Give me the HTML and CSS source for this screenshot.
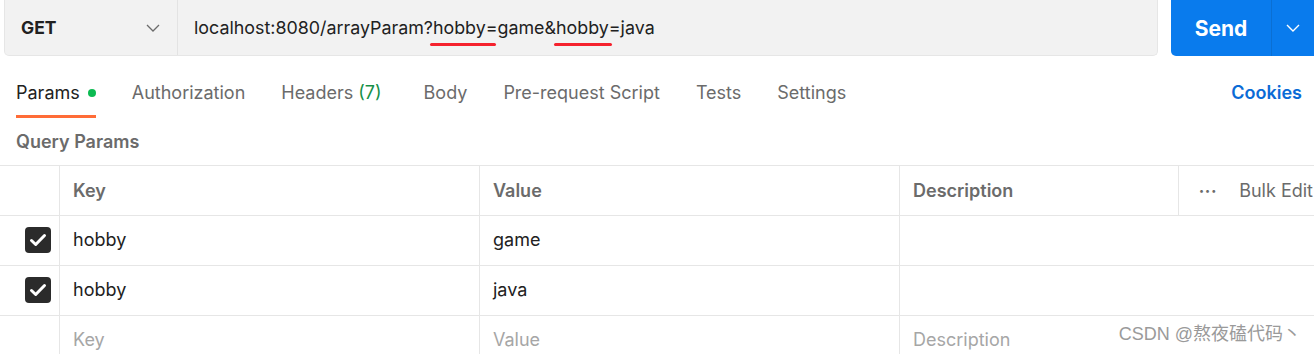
FILE: index.html
```html
<!DOCTYPE html>
<html>
<head>
<meta charset="utf-8">
<link rel="stylesheet" href="styles.css">
</head>
<body>
<div class="topbar">
  <div class="urlbox">
    <div class="method"><span class="method-name">GET</span>
      <svg class="chev" width="14" height="8" viewBox="0 0 14 8"><path d="M1 1l6 6 6-6" fill="none" stroke="#6b6b6b" stroke-width="1.3"/></svg>
    </div>
    <div class="url">localhost:8080/arrayParam?<span class="mark mark-a">hobby</span>=game&amp;<span class="mark mark-b">hobby</span>=java</div>
  </div>
  <div class="send">
    <div class="send-main">Send</div>
    <div class="send-arrow"><svg width="14" height="8" viewBox="0 0 14 8"><path d="M1 1l6 6 6-6" fill="none" stroke="#fff" stroke-width="1.4"/></svg></div>
  </div>
</div>
<div class="tabs">
  <div class="tab active">Params<span class="dot"></span></div>
  <div class="tab">Authorization</div>
  <div class="tab">Headers <span class="count">(7)</span></div>
  <div class="tab body-tab">Body</div>
  <div class="tab">Pre-request Script</div>
  <div class="tab">Tests</div>
  <div class="tab">Settings</div>
  <div class="cookies">Cookies</div>
</div>
<div class="section-title">Query Params</div>
<div class="table">
  <div class="row head">
    <div class="cell c-check"></div>
    <div class="cell c-key">Key</div>
    <div class="cell c-val">Value</div>
    <div class="cell c-desc">Description</div>
    <div class="cell c-act"><span class="dots">•••</span><span class="bulk">Bulk Edit</span></div>
  </div>
  <div class="row">
    <div class="cell c-check"><span class="cb"><svg width="18" height="14" viewBox="0 0 18 14"><path d="M2.5 7.5l4.2 4L15.5 2.5" fill="none" stroke="#fff" stroke-width="3" stroke-linecap="round" stroke-linejoin="round"/></svg></span></div>
    <div class="cell c-key">hobby</div>
    <div class="cell c-val">game</div>
    <div class="cell c-descwide"></div>
  </div>
  <div class="row">
    <div class="cell c-check"><span class="cb"><svg width="18" height="14" viewBox="0 0 18 14"><path d="M2.5 7.5l4.2 4L15.5 2.5" fill="none" stroke="#fff" stroke-width="3" stroke-linecap="round" stroke-linejoin="round"/></svg></span></div>
    <div class="cell c-key">hobby</div>
    <div class="cell c-val">java</div>
    <div class="cell c-descwide"></div>
  </div>
  <div class="row ph">
    <div class="cell c-check"></div>
    <div class="cell c-key">Key</div>
    <div class="cell c-val">Value</div>
    <div class="cell c-descwide">Description</div>
  </div>
</div>
<div class="watermark">CSDN @熬夜磕代码丶</div>
</body>
</html>
```
FILE: styles.css
```css
* { box-sizing: border-box; }
html, body { margin: 0; padding: 0; }
body {
  width: 1314px;
  height: 354px;
  overflow: hidden;
  background: #fff;
  font-family: Inter, "Noto Sans", "Noto Sans CJK SC", sans-serif;
  color: #212121;
  position: relative;
}
.topbar {
  display: flex;
  height: 56px;
  padding-left: 4px;
  gap: 13px;
}
.urlbox {
  width: 1154px;
  height: 56px;
  background: #f2f2f2;
  border: 1px solid #e6e6e6;
  border-top: none;
  border-radius: 0 0 5px 5px;
  display: flex;
  align-items: center;
}
.method {
  width: 173px;
  height: 100%;
  border-right: 1px solid #e3e3e3;
  display: flex;
  align-items: center;
  justify-content: space-between;
  padding: 0 17px 0 16px;
}
.method-name { font-weight: 700; font-size: 17.5px; color: #212121; }
.url {
  padding-left: 16px;
  padding-bottom: 1px;
  font-size: 17.85px;
  color: #212121;
}
.mark { position: relative; }
.mark::after {
  content: "";
  position: absolute;
  top: 26px;
  height: 3px;
  border-radius: 2px;
  background: #f5222d;
}
.mark-a::after { left: -3px; right: -10px; }
.mark-b::after { left: -2px; right: -3px; }
.send {
  flex: 1;
  height: 56px;
  background: #097bed;
  border-radius: 0 0 0 5px;
  display: flex;
  color: #fff;
}
.send-main {
  width: 101px;
  display: flex;
  align-items: center;
  justify-content: center;
  font-weight: 700;
  font-size: 21px;
  border-right: 1px solid #0a6fd3;
}
.send-arrow {
  flex: 1;
  display: flex;
  align-items: center;
  justify-content: center;
}
.tabs {
  display: flex;
  height: 62px;
  padding: 0 12px 0 16px;
  gap: 36px;
}
.tab {
  display: flex;
  align-items: center;
  font-size: 18px;
  color: #6b6b6b;
  padding-top: 14px;
  border-bottom: 3px solid transparent;
  height: 62px;
}
.tab.active { color: #212121; border-bottom-color: #ff6c37; }
.dot {
  width: 8px; height: 8px; border-radius: 50%;
  background: #0cbb52; margin-left: 8px;
}
.count { color: #168f48; margin-left: 5px; }
.body-tab { margin-left: 6px; }
.cookies {
  margin-left: auto;
  display: flex;
  align-items: center;
  padding-top: 11px;
  font-weight: 600;
  font-size: 18px;
  color: #0b6bd6;
}
.section-title {
  padding: 13px 16px 0;
  height: 47px;
  font-weight: 600;
  font-size: 18px;
  color: #6b6b6b;
}
.table { border-top: 1px solid #e6e6e6; }
.row {
  display: flex;
  height: 50px;
  border-bottom: 1px solid #e6e6e6;
}
.cell {
  display: flex;
  align-items: center;
  font-size: 18px;
  padding-left: 13px;
  padding-bottom: 2px;
  border-right: 1px solid #e6e6e6;
}
.c-check { width: 60px; justify-content: flex-start; padding: 0 0 1px 25px; }
.c-key { width: 420px; }
.c-val { width: 420px; }
.c-desc { width: 279px; }
.c-act { flex: 1; border-right: none; padding-left: 20px; }
.c-descwide { flex: 1; border-right: none; }
.head .cell { font-weight: 600; color: #6b6b6b; padding-bottom: 1px; }
.head .cell.c-act { font-weight: 400; }
.dots { font-size: 9px; color: #6b6b6b; letter-spacing: 1px; }
.bulk { margin-left: 22px; color: #6b6b6b; white-space: nowrap; }
.ph .cell { color: #a6a6a6; padding-bottom: 3px; }
.cb {
  width: 26px; height: 26px; border-radius: 4px;
  background: #2b2b2b;
  display: flex; align-items: center; justify-content: center;
}
.watermark {
  position: absolute;
  right: 13px;
  bottom: 9px;
  font-size: 18px;
  color: #9a9a9a;
  font-family: "Liberation Sans", "Noto Sans CJK SC", sans-serif;
}
```
